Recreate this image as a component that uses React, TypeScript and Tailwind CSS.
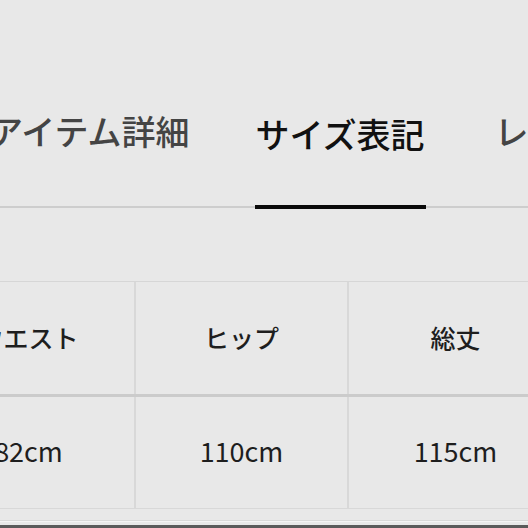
import React from "react";

const font = { fontFamily: '"Noto Sans CJK JP", "Noto Sans", sans-serif' };

export default function App() {
  const headers = ["ウエスト", "ヒップ", "総丈"];
  const values = ["82cm", "110cm", "115cm"];
  return (
    <div
      className="w-[528px] h-[528px] bg-[#e8e8e8] overflow-hidden flex flex-col"
      style={font}
    >
      {/* Tabs */}
      <div className="h-[208px] shrink-0 flex items-end border-b-2 border-[#cdcdcd]">
        <div className="flex items-end gap-[65px] ml-[-11px] whitespace-nowrap font-medium">
          <div className="text-[34px] leading-[34px] text-[#444] pb-[58px]">アイテム詳細</div>
          <div className="w-[171px] text-[34px] leading-[34px] text-[#111] pb-[54px] border-b-4 border-[#0a0a0a] -mb-[3px] flex justify-center">
            サイズ表記
          </div>
          <div className="ml-[4px] text-[34px] leading-[34px] text-[#444] pb-[58px]">レビュー</div>
        </div>
      </div>

      {/* Table */}
      <div className="mt-[73px] ml-[-77px] flex flex-col w-[700px]">
        <div className="flex border-t border-[#d6d6d6] border-b-[3px] border-b-[#cbcbcb]">
          {headers.map((h, i) => (
            <div
              key={h}
              className={`w-[213px] h-[112px] flex items-center justify-center text-[25px] font-medium text-[#1e1e1e] pb-[1px] ${
                i < 2 ? "border-r-2 border-[#d8d8d8]" : ""
              }`}
            >
              {h}
            </div>
          ))}
        </div>
        <div className="flex border-b border-[#d8d8d8]">
          {values.map((v, i) => (
            <div
              key={v}
              className={`w-[213px] h-[111px] flex items-center justify-center text-[27px] text-[#1e1e1e] pb-[3px] ${
                i < 2 ? "border-r-2 border-[#d8d8d8]" : ""
              }`}
            >
              {v}
            </div>
          ))}
        </div>
      </div>
      <div className="mt-[11px] h-[2px] bg-[#f4f4f4] border-t border-[#d9d9d9]" />
      <div className="mt-[3px] h-[3px] bg-[#5a5a5a]" />
    </div>
  );
}
